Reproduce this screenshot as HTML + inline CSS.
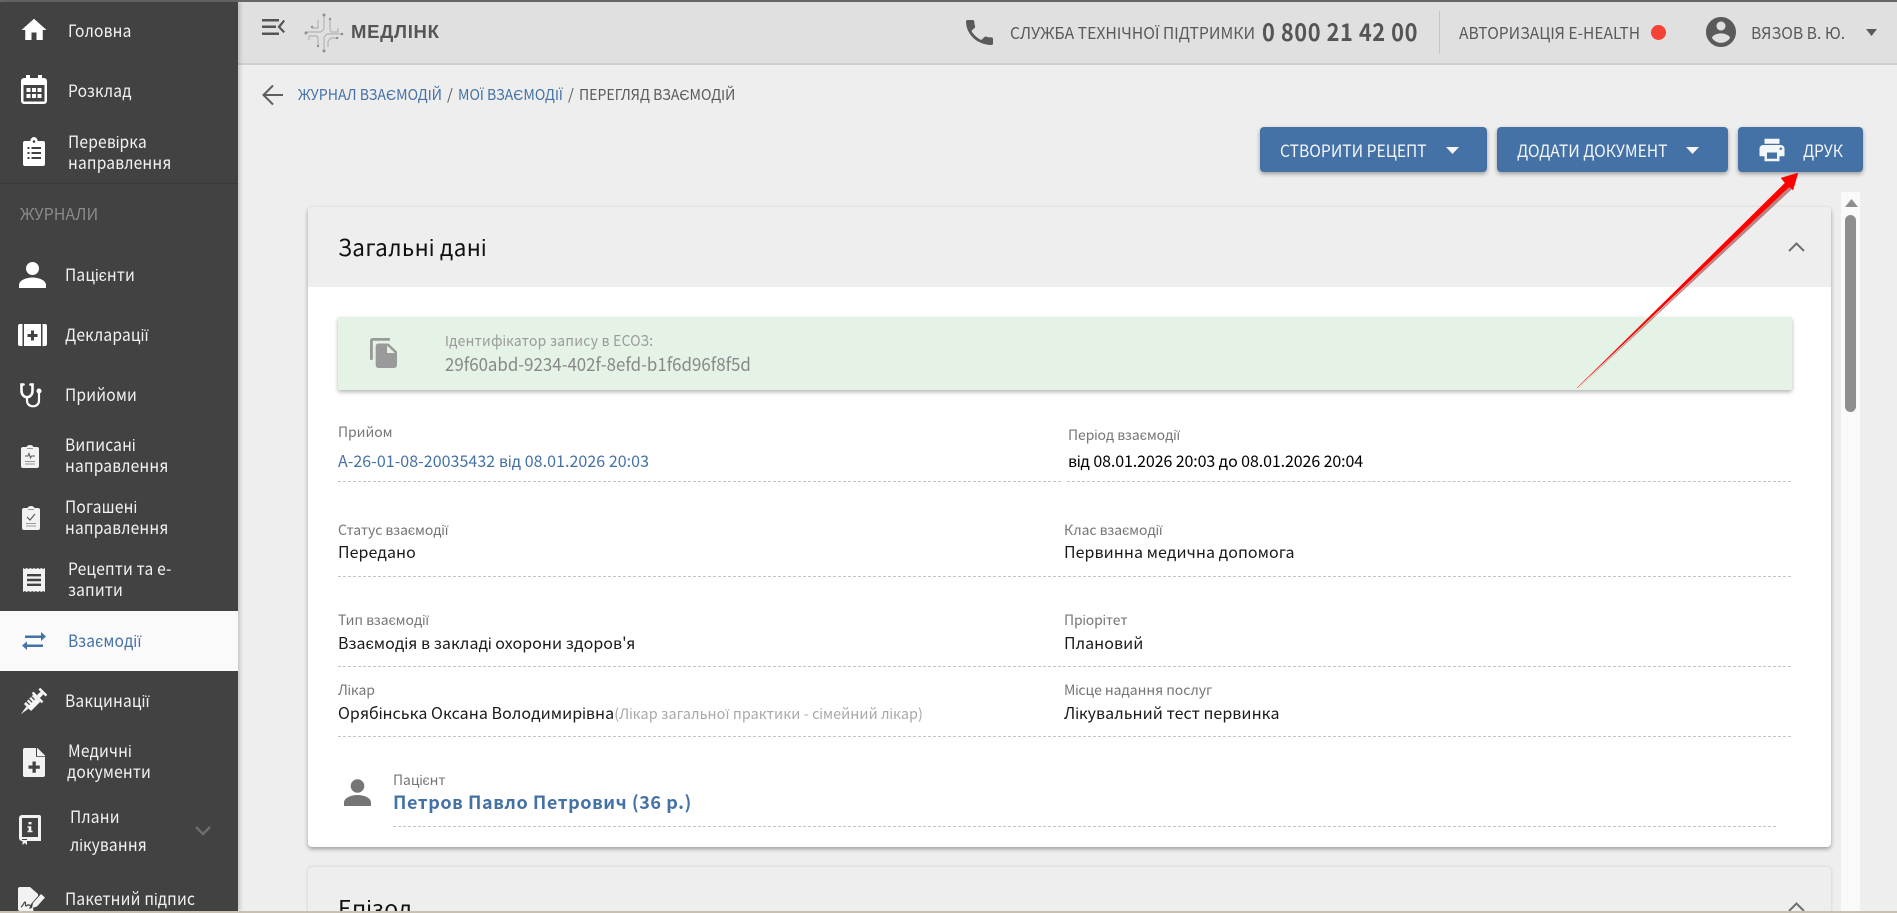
<!DOCTYPE html>
<html lang="uk"><head><meta charset="utf-8"><title>Медлінк</title>
<style>
html,body{margin:0;padding:0;width:1897px;height:913px;overflow:hidden;background:#eee}
body{position:relative;font-family:"Noto Sans CJK SC","Liberation Sans",sans-serif;font-size:16px;color:#111}
.a,.t,svg{position:absolute}
.t{white-space:nowrap;line-height:20px;height:20px;transform-origin:left center}
.s{color:#f2f2f2;font-size:17px;letter-spacing:.2px;transform:scaleX(.915)}
.l{color:#757575;font-size:14px;letter-spacing:-.05px}
.v{color:#1a1a1a;font-size:16px;letter-spacing:.05px}
.d{position:absolute;height:0;border-top:1px dashed #c4c4c4}
.b{position:absolute;top:127px;height:45px;background:#4472a6;border-radius:4px;box-shadow:0 2px 4px rgba(0,0,0,.35)}
.w{color:#f4f6f9;font-size:17px;top:140px;transform:scaleX(.92)}
.h{color:#5a5a5a;font-size:16.5px}
.c{font-size:15px;transform:scaleX(.94)}
</style></head><body>

<div class="a" style="left:238px;top:0;width:1659px;height:63px;background:#e0e0e0;border-bottom:2px solid #cfcfcf"></div>
<div class="a" style="left:0;top:0;width:1897px;height:2px;background:#666"></div>

<!-- sidebar -->
<div class="a" style="left:0;top:2px;width:238px;height:909px;background:#424242;box-shadow:2px 0 4px rgba(0,0,0,.18)"></div>
<div class="a" style="left:0;top:183px;width:238px;height:1px;background:#393939"></div>
<div class="a" style="left:0;top:611px;width:238px;height:60px;background:#fafafa"></div>

<svg style="left:19px;top:15px" width="30" height="30" viewBox="0 0 24 24" fill="#fff"><path d="M10 20v-6h4v6h5v-8h3L12 3 2 12h3v8z"/></svg>
<svg style="left:21px;top:75px" width="26" height="29" viewBox="0 0 26 29"><path fill="#fff" d="M5 0h4v3h8V0h4v3h2a3 3 0 0 1 3 3v20a3 3 0 0 1-3 3H3a3 3 0 0 1-3-3V6a3 3 0 0 1 3-3h2z"/><rect x="2.500" y="10" width="21" height="16.500" fill="#424242"/><g fill="#fff"><rect x="5.500" y="13" width="4" height="4"/><rect x="11" y="13" width="4" height="4"/><rect x="16.500" y="13" width="4" height="4"/><rect x="5.500" y="19" width="4" height="4"/><rect x="11" y="19" width="4" height="4"/><rect x="16.500" y="19" width="4" height="4"/></g></svg>
<svg style="left:23px;top:137px" width="22" height="29" viewBox="0 0 22 29"><path fill="#fff" d="M2 4h5.200C7.700 1.700 9.200 0 11 0s3.300 1.700 3.800 4H20a2 2 0 0 1 2 2v21a2 2 0 0 1-2 2H2a2 2 0 0 1-2-2V6a2 2 0 0 1 2-2z"/><g fill="#424242"><circle cx="11" cy="4.500" r="1.300"/><rect x="4.500" y="10" width="2" height="2"/><rect x="8.500" y="10" width="9.500" height="2"/><rect x="4.500" y="15" width="2" height="2"/><rect x="8.500" y="15" width="9.500" height="2"/><rect x="4.500" y="20" width="2" height="2"/><rect x="8.500" y="20" width="9.500" height="2"/></g></svg>
<svg style="left:19px;top:262px" width="27" height="26" viewBox="0 0 27 26" fill="#fff"><circle cx="13.500" cy="6.500" r="6.500"/><path d="M0 26v-3c0-5 8-7.500 13.500-7.500S27 18 27 23v3z"/></svg>
<svg style="left:18px;top:324px" width="29" height="22" viewBox="0 0 29 22"><path fill="#fff" d="M2 0h2.500v22H2a2 2 0 0 1-2-2V2a2 2 0 0 1 2-2zM6 0h17v22H6zM24.500 0H27a2 2 0 0 1 2 2v18a2 2 0 0 1-2 2h-2.500z"/><path fill="#424242" d="M13 6.500h3V10h3.500v3H16v3.500h-3V13H9.500v-3H13z"/></svg>
<svg style="left:19px;top:383px" width="25" height="25" viewBox="0 0 25 25" fill="none" stroke="#fff"><path stroke-width="2.600" stroke-linecap="round" d="M4.500 1.500H2.500v6.500c0 3.700 2.800 6.300 5.500 6.300s5.500-2.600 5.500-6.300V1.500h-2"/><path stroke-width="2.200" d="M8 14v3.500c0 3.500 2.500 5.800 6 5.800s6-2.300 6-5.800V10"/><circle cx="20" cy="8" r="1.800" fill="#fff" stroke-width="1.500"/></svg>
<svg style="left:21px;top:445px" width="18" height="23" viewBox="0 0 18 23"><path fill="#f2f2f2" d="M2 2h3.500C6 .8 7.400 0 9 0s3 .8 3.500 2H16a2 2 0 0 1 2 2v17a2 2 0 0 1-2 2H2a2 2 0 0 1-2-2V4a2 2 0 0 1 2-2z"/><path fill="none" stroke="#555" stroke-width="1" d="M4 11h3l1-2.500 1.500 4.500 1-2h3.500"/><path fill="none" stroke="#999" stroke-width="1" d="M4 16.500h10M4 19h10M6 3.500h6"/></svg>
<svg style="left:22px;top:506px" width="18" height="24" viewBox="0 0 18 24"><path fill="#f2f2f2" d="M2 2h3.500C6 .8 7.400 0 9 0s3 .8 3.500 2H16a2 2 0 0 1 2 2v18a2 2 0 0 1-2 2H2a2 2 0 0 1-2-2V4a2 2 0 0 1 2-2z"/><path fill="none" stroke="#555" stroke-width="1.100" d="M5 11l3 3 5-6"/><path fill="none" stroke="#999" stroke-width="1" d="M4 17.500h10M4 20h10M6 3.500h6"/></svg>
<svg style="left:23px;top:568px" width="22" height="24" viewBox="0 0 22 24"><path fill="#f2f2f2" d="M0 0l1.800 1L3.700 0l1.800 1L7.300 0l1.900 1L11 0l1.800 1L14.700 0l1.800 1L18.300 0l1.900 1L22 0v24l-1.800-1-1.900 1-1.800-1-1.800 1-1.900-1L11 24l-1.800-1-1.900 1-1.800-1-1.800 1-1.900-1L0 24z"/><path fill="#424242" d="M4 6h14v2.400H4zM4 10.800h14v2.400H4zM4 15.600h14V18H4z"/></svg>
<svg style="left:22px;top:632px" width="24" height="18" viewBox="0 0 24 18" fill="#4472a6"><path d="M3 3.500h16V0l5 4.500L19 9V6H3zM5 9.500V12.500h16v2.500H5v3L0 13.500z"/></svg>
<svg style="left:19px;top:687px" width="29" height="29" viewBox="0 0 29 29" fill="#f5f5f5"><g transform="rotate(-45 14.500 14.500)"><path d="M-3.500 14.500L6 13v3z"/><rect x="6" y="9.500" width="13" height="10"/><rect x="19" y="7.500" width="2.500" height="14"/><rect x="21.500" y="12.500" width="5" height="4"/><rect x="26.500" y="9.500" width="2.500" height="10"/><path stroke="#424242" stroke-width="1.300" d="M9.500 9.500v4.500M13 9.500v4.500M16.500 9.500v4.500"/></g></svg>
<svg style="left:23px;top:748px" width="22" height="29" viewBox="0 0 22 29"><path fill="#f2f2f2" d="M2 0h12.500L22 7.500V27a2 2 0 0 1-2 2H2a2 2 0 0 1-2-2V2a2 2 0 0 1 2-2z"/><path fill="#424242" d="M14 0v8h8v.8h-9V0z"/><path fill="#424242" d="M9.500 13.500h3.300v4h4v3.300h-4v4H9.500v-4h-4v-3.300h4z"/></svg>
<svg style="left:19px;top:815px" width="22" height="30" viewBox="0 0 22 30"><path fill="#f2f2f2" d="M3 0h17a2 2 0 0 1 2 2v24H8v4l-2.200-2L3.500 30v-4H3a3 3 0 0 1-3-3V3a3 3 0 0 1 3-3z"/><rect x="3" y="3" width="16" height="19" fill="#424242"/><path fill="#424242" d="M3 24h5v1H3z"/><path fill="#f2f2f2" d="M9.500 7h3v2.400h-3zM8.500 11.200h3.800v4.600h1.200v1.500H8.500v-1.500h1.200v-3.100H8.500z"/></svg>
<svg style="left:18px;top:887px" width="28" height="24" viewBox="0 0 28 24"><path fill="#f2f2f2" d="M2 0h10l8 7v2l-7 8-2 5 4-1.500.5 3.500H2a2 2 0 0 1-2-2V2a2 2 0 0 1 2-2z"/><path fill="#f2f2f2" d="M15 16L23 7l4 3.500-8 9-5 1.500z"/><path fill="none" stroke="#424242" stroke-width="1.200" d="M3 20c2-1 3-5 4-5s0 4 1 4 2-2 3-1l2 1"/></svg>
<svg style="left:195px;top:825px" width="16" height="12" viewBox="0 0 16 12" fill="none" stroke="#6e6e6e" stroke-width="2.400"><path d="M1 2l7 7 7-7"/></svg>

<div class="t s" style="left:68px;top:20px">Головна</div>
<div class="t s" style="left:68px;top:80px">Розклад</div>
<div class="t s" style="left:68px;top:131px">Перевірка</div>
<div class="t s" style="left:68px;top:152px">направлення</div>
<div class="t" style="left:20px;top:203px;color:#8a8a8a;font-size:16px">ЖУРНАЛИ</div>
<div class="t s" style="left:65px;top:264px">Пацієнти</div>
<div class="t s" style="left:65px;top:324px">Декларації</div>
<div class="t s" style="left:65px;top:384px">Прийоми</div>
<div class="t s" style="left:65px;top:434px">Виписані</div>
<div class="t s" style="left:65px;top:455px">направлення</div>
<div class="t s" style="left:65px;top:496px">Погашені</div>
<div class="t s" style="left:65px;top:517px">направлення</div>
<div class="t s" style="left:68px;top:558px">Рецепти та е-</div>
<div class="t s" style="left:68px;top:579px">запити</div>
<div class="t s" style="left:68px;top:630px;color:#4472a6">Взаємодії</div>
<div class="t s" style="left:65px;top:690px">Вакцинації</div>
<div class="t s" style="left:68px;top:740px">Медичні</div>
<div class="t s" style="left:67px;top:761px">документи</div>
<div class="t s" style="left:70px;top:806px">Плани</div>
<div class="t s" style="left:70px;top:834px">лікування</div>
<div class="t s" style="left:65px;top:888px">Пакетний підпис</div>

<!-- header -->
<svg style="left:262px;top:19px" width="23" height="16" viewBox="0 0 23 16" fill="#555"><rect width="17" height="2.500"/><rect y="6.500" width="14" height="2.500"/><rect y="13.500" width="17" height="2.500"/><path d="M23 2l-1.500-1.500L15.500 8l6 6.500L23 13l-4.500-5z" transform="translate(0 .3) scale(1 .95)"/></svg>
<svg style="left:304px;top:13px" width="40" height="40" viewBox="0 0 40 40" fill="none" stroke="#a8a8a8" stroke-width=".9"><path d="M20 1v15l-3 3H1M20 39V24l3-3h16M14 7v8h-6M8 15v-1M26 7v9l1 3h7v-4M26 6v1M34 24v1h-7l-3 3v6M14 33v-8l-1-2H5M5 23v4h0"/><g fill="#909090" stroke="none"><circle cx="20" cy="2" r="1.500"/><circle cx="20" cy="38" r="1.500"/><circle cx="2" cy="20" r="1.500"/><circle cx="38" cy="21" r="1.300"/><circle cx="8" cy="14" r="1.200"/><circle cx="26" cy="6" r="1.200"/><circle cx="33" cy="25" r="1.200"/><circle cx="14" cy="33" r="1.200"/></g></svg>
<div class="t" style="left:351px;top:22px;color:#555;font:bold 18.5px/20px 'Liberation Sans',sans-serif;letter-spacing:.7px">МЕДЛІНК</div>

<svg style="left:966px;top:20px" width="27" height="25" viewBox="3 3 18 18" preserveAspectRatio="none" fill="#5a5a5a"><path d="M6.620 10.790c1.440 2.830 3.760 5.140 6.590 6.590l2.200-2.200c.27-.27.670-.360 1.020-.240 1.120.370 2.330.570 3.570.570.550 0 1 .450 1 1V20c0 .550-.450 1-1 1-9.390 0-17-7.610-17-17 0-.550.450-1 1-1h3.500c.550 0 1 .450 1 1 0 1.250.200 2.450.570 3.570.110.350.030.740-.250 1.020l-2.200 2.200z"/></svg>
<div class="t h" style="left:1010px;top:22px;transform:scaleX(.955)">СЛУЖБА ТЕХНІЧНОЇ ПІДТРИМКИ</div>
<div class="t" style="left:1262px;top:21px;color:#555;font-size:24px;font-weight:700;letter-spacing:.6px;transform:scaleX(.908)">0 800 21 42 00</div>
<div class="a" style="left:1439px;top:11px;width:1px;height:43px;background:#c6c6c6"></div>
<div class="t h" style="left:1459px;top:22px;transform:scaleX(.945)">АВТОРИЗАЦІЯ E-HEALTH</div>
<div class="a" style="left:1651px;top:25px;width:15px;height:15px;border-radius:50%;background:#f44336"></div>
<svg style="left:1703px;top:14px" width="36" height="36" viewBox="0 0 24 24" fill="#5a5a5a"><path d="M12 2C6.480 2 2 6.480 2 12s4.480 10 10 10 10-4.480 10-10S17.520 2 12 2zm0 3c1.660 0 3 1.340 3 3s-1.340 3-3 3-3-1.340-3-3 1.340-3 3-3zm0 14.200c-2.500 0-4.710-1.280-6-3.220.030-1.990 4-3.080 6-3.080 1.990 0 5.970 1.090 6 3.080-1.290 1.940-3.500 3.220-6 3.220z"/></svg>
<div class="t h" style="left:1751px;top:22px;transform:scaleX(.95)">ВЯЗОВ В. Ю.</div>
<svg style="left:1866px;top:29px" width="11" height="7" viewBox="0 0 11 7" fill="#5a5a5a"><path d="M0 0h11L5.500 7z"/></svg>

<!-- breadcrumb -->
<svg style="left:262px;top:84px" width="22" height="22" viewBox="0 0 22 22" fill="none" stroke="#5f5f5f" stroke-width="2"><path d="M21 11H2M11 1.500L1.500 11l9.500 9.500"/></svg>
<div class="t c" style="left:298px;top:85px;color:#4472a6">ЖУРНАЛ ВЗАЄМОДІЙ</div>
<div class="t" style="left:447px;top:85px;font-size:15px;color:#5a5a5a">/</div>
<div class="t c" style="left:458px;top:85px;color:#4472a6">МОЇ ВЗАЄМОДІЇ</div>
<div class="t" style="left:568px;top:85px;font-size:15px;color:#5a5a5a">/</div>
<div class="t c" style="left:579px;top:85px;color:#5a5a5a">ПЕРЕГЛЯД ВЗАЄМОДІЙ</div>

<!-- buttons -->
<div class="b" style="left:1260px;width:227px"></div>
<div class="b" style="left:1497px;width:231px"></div>
<div class="b" style="left:1738px;width:125px"></div>
<div class="t w" style="left:1280px">СТВОРИТИ РЕЦЕПТ</div>
<svg style="left:1446px;top:147px" width="13" height="7" viewBox="0 0 13 7" fill="#f4f6f9"><path d="M0 0h13L6.500 7z"/></svg>
<div class="t w" style="left:1517px">ДОДАТИ ДОКУМЕНТ</div>
<svg style="left:1686px;top:147px" width="13" height="7" viewBox="0 0 13 7" fill="#f4f6f9"><path d="M0 0h13L6.500 7z"/></svg>
<svg style="left:1757px;top:135px" width="30" height="30" viewBox="0 0 24 24" fill="#f4f6f9"><path d="M19 8H5c-1.660 0-3 1.340-3 3v6h4v4h12v-4h4v-6c0-1.660-1.340-3-3-3zm-3 11H8v-5h8v5zm3-7c-.550 0-1-.450-1-1s.450-1 1-1 1 .450 1 1-.450 1-1 1zm-1-9H6v4h12V3z"/></svg>
<div class="t w" style="left:1803px">ДРУК</div>

<!-- scrollbar -->
<div class="a" style="left:1841px;top:192px;width:19px;height:719px;background:#fafafa"></div>
<svg style="left:1845px;top:199px" width="13" height="8" viewBox="0 0 13 8" fill="#8e8e8e"><path d="M6.500 0L13 8H0z"/></svg>
<div class="a" style="left:1845px;top:215px;width:11px;height:197px;border-radius:6px;background:#8e8e8e"></div>

<!-- card 1 -->
<div class="a" style="left:308px;top:207px;width:1523px;height:640px;background:#fff;border-radius:4px;box-shadow:0 2px 4px rgba(0,0,0,.35)"></div>
<div class="a" style="left:308px;top:207px;width:1523px;height:80px;background:#eee;border-radius:4px 4px 0 0"></div>
<div class="t" style="left:338px;top:234px;height:24px;line-height:24px;font-size:23px;letter-spacing:.4px;color:#111;transform:scaleX(.976)">Загальні дані</div>
<svg style="left:1788px;top:242px" width="17" height="10" viewBox="0 0 17 10" fill="none" stroke="#6e6e6e" stroke-width="2"><path d="M1 9l7.500-7.500L16 9"/></svg>

<div class="a" style="left:338px;top:317px;width:1454px;height:73px;background:#e5f2e6;border-radius:2px;box-shadow:0 2px 4px rgba(0,0,0,.3)"></div>
<svg style="left:370px;top:338px" width="27" height="30" viewBox="2 1 19 22" preserveAspectRatio="none" fill="#9a9a9a"><path d="M16 1H4c-1.100 0-2 .900-2 2v14h2V3h12V1zm-1 4l6 6v10c0 1.100-.900 2-2 2H7.990C6.890 23 6 22.100 6 21l.010-14c0-1.100.890-2 1.990-2h7zm-1 7h5.500L14 6.500V12z"/></svg>
<div class="t" style="left:445px;top:331px;color:#9a9a9a;font-size:15px;letter-spacing:.3px;transform:scaleX(.925)">Ідентифікатор запису в ЕСОЗ:</div>
<div class="t" style="left:445px;top:354px;color:#888;font-size:18px;transform:scaleX(.937)">29f60abd-9234-402f-8efd-b1f6d96f8f5d</div>

<div class="t l" style="left:338px;top:422px">Прийом</div>
<div class="t v" style="left:338px;top:450px;color:#4472a6">А-26-01-08-20035432 від 08.01.2026 20:03</div>
<div class="d" style="left:338px;top:481px;width:723px"></div>
<div class="t l" style="left:1068px;top:425px">Період взаємодії</div>
<div class="t v" style="left:1068px;top:450px;color:#000;letter-spacing:-.1px">від 08.01.2026 20:03 до 08.01.2026 20:04</div>
<div class="d" style="left:1067px;top:481px;width:724px"></div>

<div class="t l" style="left:338px;top:520px">Статус взаємодії</div>
<div class="t v" style="left:338px;top:541px">Передано</div>
<div class="d" style="left:338px;top:576px;width:1453px"></div>
<div class="t l" style="left:1064px;top:520px">Клас взаємодії</div>
<div class="t v" style="left:1064px;top:541px">Первинна медична допомога</div>

<div class="t l" style="left:338px;top:610px">Тип взаємодії</div>
<div class="t v" style="left:338px;top:632px">Взаємодія в закладі охорони здоров'я</div>
<div class="d" style="left:338px;top:666px;width:1453px"></div>
<div class="t l" style="left:1064px;top:610px">Пріорітет</div>
<div class="t v" style="left:1064px;top:632px">Плановий</div>

<div class="t l" style="left:338px;top:680px">Лікар</div>
<div class="t v" style="left:338px;top:702px">Орябінська Оксана Володимирівна<span style="color:#a8a8a8;font-size:14.4px;letter-spacing:.08px">(Лікар загальної практики - сімейний лікар)</span></div>
<div class="d" style="left:338px;top:736px;width:1453px"></div>
<div class="t l" style="left:1064px;top:680px">Місце надання послуг</div>
<div class="t v" style="left:1064px;top:702px">Лікувальний тест первинка</div>

<svg style="left:344px;top:779px" width="27" height="27" viewBox="0 0 27 27" fill="#757575"><circle cx="13.500" cy="7" r="6.800"/><path d="M0 27v-3.500c0-5 8-7.500 13.500-7.500S27 18.500 27 23.500V27z"/></svg>
<div class="t l" style="left:393px;top:770px">Пацієнт</div>
<div class="t" style="left:393px;top:792px;color:#4472a6;font-size:18px;font-weight:700;letter-spacing:.55px">Петров Павло Петрович (36 р.)</div>
<div class="d" style="left:393px;top:826px;width:1383px"></div>

<!-- card 2 -->
<div class="a" style="left:308px;top:867px;width:1523px;height:60px;background:#eee;border-radius:4px 4px 0 0;box-shadow:0 0 3px rgba(0,0,0,.15)"></div>
<div class="t" style="left:338px;top:895px;height:24px;line-height:24px;font-size:23px;letter-spacing:.4px;color:#111">Епізод</div>
<svg style="left:1788px;top:902px" width="17" height="10" viewBox="0 0 17 10" fill="none" stroke="#6e6e6e" stroke-width="2"><path d="M1 9l7.500-7.500L16 9"/></svg>

<div class="a" style="left:0;top:911px;width:1897px;height:2px;background:#c8c1b0"></div>

<!-- annotation arrow -->
<svg style="left:1570px;top:165px" width="236" height="230" viewBox="1570 165 236 230"><path fill="#7a0000" opacity=".45" d="M1577 389.500L1789 187l2.500 2.500z"/><path fill="#ff0000" stroke="#ff0000" stroke-width=".4" d="M1577 388L1785 183 1781 178 1798 173 1793 190 1789 187z"/></svg>

</body></html>
